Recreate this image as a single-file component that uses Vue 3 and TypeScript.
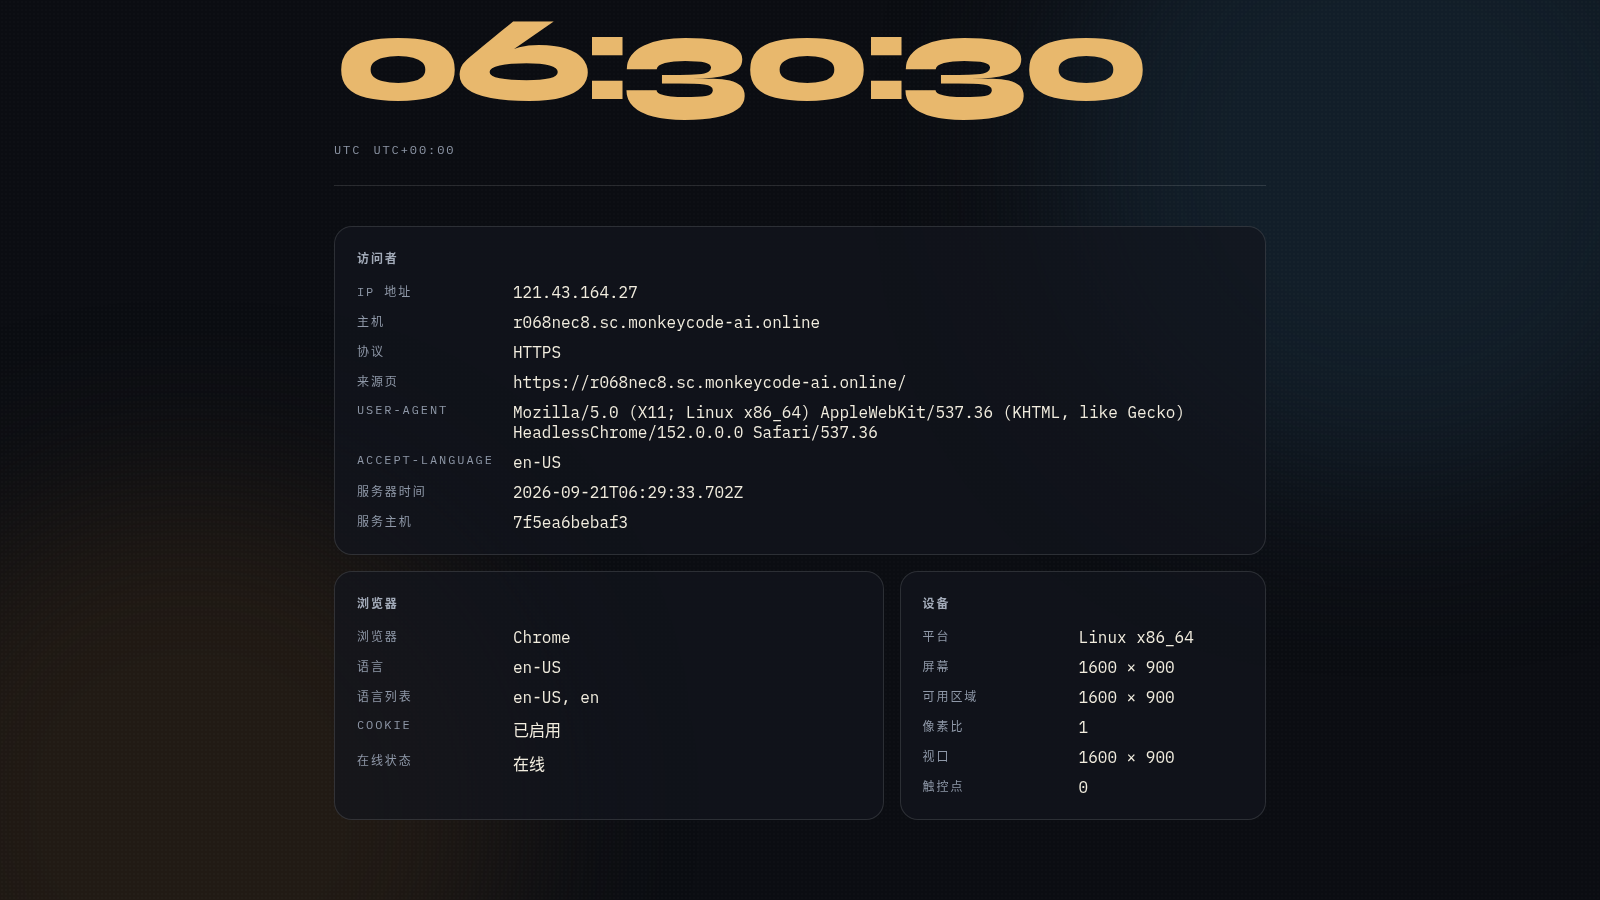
<script setup lang="ts">
interface Row {
  label: string
  value: string
}

interface Card {
  id: string
  title: string
  rows: Row[]
}

const clock = '06:30:30'
const zone = 'UTC'
const offset = 'UTC+00:00'

const cards: Card[] = [
  {
    id: 'visitor',
    title: '访问者',
    rows: [
      { label: 'IP 地址', value: '121.43.164.27' },
      { label: '主机', value: 'r068nec8.sc.monkeycode-ai.online' },
      { label: '协议', value: 'HTTPS' },
      { label: '来源页', value: 'https://r068nec8.sc.monkeycode-ai.online/' },
      {
        label: 'User-Agent',
        value:
          'Mozilla/5.0 (X11; Linux x86_64) AppleWebKit/537.36 (KHTML, like Gecko) HeadlessChrome/152.0.0.0 Safari/537.36',
      },
      { label: 'Accept-Language', value: 'en-US' },
      { label: '服务器时间', value: '2026-09-21T06:29:33.702Z' },
      { label: '服务主机', value: '7f5ea6bebaf3' },
    ],
  },
  {
    id: 'browser',
    title: '浏览器',
    rows: [
      { label: '浏览器', value: 'Chrome' },
      { label: '语言', value: 'en-US' },
      { label: '语言列表', value: 'en-US, en' },
      { label: 'Cookie', value: '已启用' },
      { label: '在线状态', value: '在线' },
    ],
  },
  {
    id: 'device',
    title: '设备',
    rows: [
      { label: '平台', value: 'Linux x86_64' },
      { label: '屏幕', value: '1600 × 900' },
      { label: '可用区域', value: '1600 × 900' },
      { label: '像素比', value: '1' },
      { label: '视口', value: '1600 × 900' },
      { label: '触控点', value: '0' },
    ],
  },
]
</script>

<template>
  <div class="page">
    <div class="backdrop" aria-hidden="true">
      <div class="glow glow-blue"></div>
      <div class="glow glow-amber"></div>
      <div class="dots"></div>
    </div>
    <main class="content">
      <header class="header">
        <time class="clock">{{ clock }}</time>
        <div class="zone">
          <span>{{ zone }}</span>
          <span>{{ offset }}</span>
        </div>
      </header>
      <div class="cards">
        <section v-for="card in cards" :key="card.id" class="card" :class="card.id">
          <h2 class="title">{{ card.title }}</h2>
          <dl class="rows">
            <template v-for="row in card.rows" :key="row.label">
              <dt>{{ row.label }}</dt>
              <dd>{{ row.value }}</dd>
            </template>
          </dl>
        </section>
      </div>
    </main>
  </div>
</template>

<style>
body {
  margin: 0;
  background: #0b0d12;
}
</style>

<style scoped>
.page {
  position: relative;
  min-height: 100vh;
  box-sizing: border-box;
  color: #f2eddf;
  font-family: 'IBM Plex Mono', 'Liberation Mono', 'Noto Sans CJK SC', monospace;
  font-size: 16px;
}

.backdrop {
  position: fixed;
  inset: 0;
  overflow: hidden;
}

.glow {
  position: absolute;
  border-radius: 50%;
  filter: blur(80px);
}

.glow-blue {
  top: -20vh;
  right: -8vw;
  width: 42vw;
  height: 42vw;
  background: #121e29;
}

.glow-amber {
  bottom: -25vh;
  left: -8vw;
  width: 40vw;
  height: 40vw;
  background: #211a14;
}

.dots {
  position: absolute;
  inset: 0;
  background-image: radial-gradient(rgba(255, 255, 255, 0.014) 1px, transparent 1px);
  background-size: 4px 4px;
}

.content {
  position: relative;
  max-width: 932px;
  margin: 0 auto;
  padding: 0 24px 80px;
}

.header {
  padding-bottom: 25px;
  border-bottom: 1px solid rgba(255, 255, 255, 0.12);
}

.clock {
  display: block;
  margin-bottom: 20px;
  color: #e8b86d;
  font-family: Syne, 'DejaVu Sans', sans-serif;
  font-size: 120px;
  font-weight: 800;
  line-height: 120px;
  letter-spacing: -0.05em;
  white-space: nowrap;
}

.zone {
  display: flex;
  gap: 12px;
  color: #8f98a8;
  font-size: 12px;
  line-height: 20px;
  letter-spacing: 0.16em;
}

.cards {
  display: grid;
  grid-template-columns: 3fr 2fr;
  gap: 16px;
  padding-top: 40px;
}

.card {
  padding: 22px;
  border: 1px solid rgba(255, 255, 255, 0.12);
  border-radius: 18px;
  background: rgba(18, 21, 29, 0.72);
}

.visitor {
  grid-column: 1 / -1;
}

.title {
  margin: 0 0 16px;
  color: #a3abb9;
  font-size: 12px;
  font-weight: 600;
  letter-spacing: 0.16em;
}

.rows {
  display: grid;
  grid-template-columns: 140px 1fr;
  gap: 10px 16px;
  margin: 0;
}

dt {
  color: #8f98a8;
  font-size: 12px;
  letter-spacing: 0.16em;
  text-transform: uppercase;
  white-space: nowrap;
}

dd {
  margin: 0;
  overflow-wrap: anywhere;
}
</style>
